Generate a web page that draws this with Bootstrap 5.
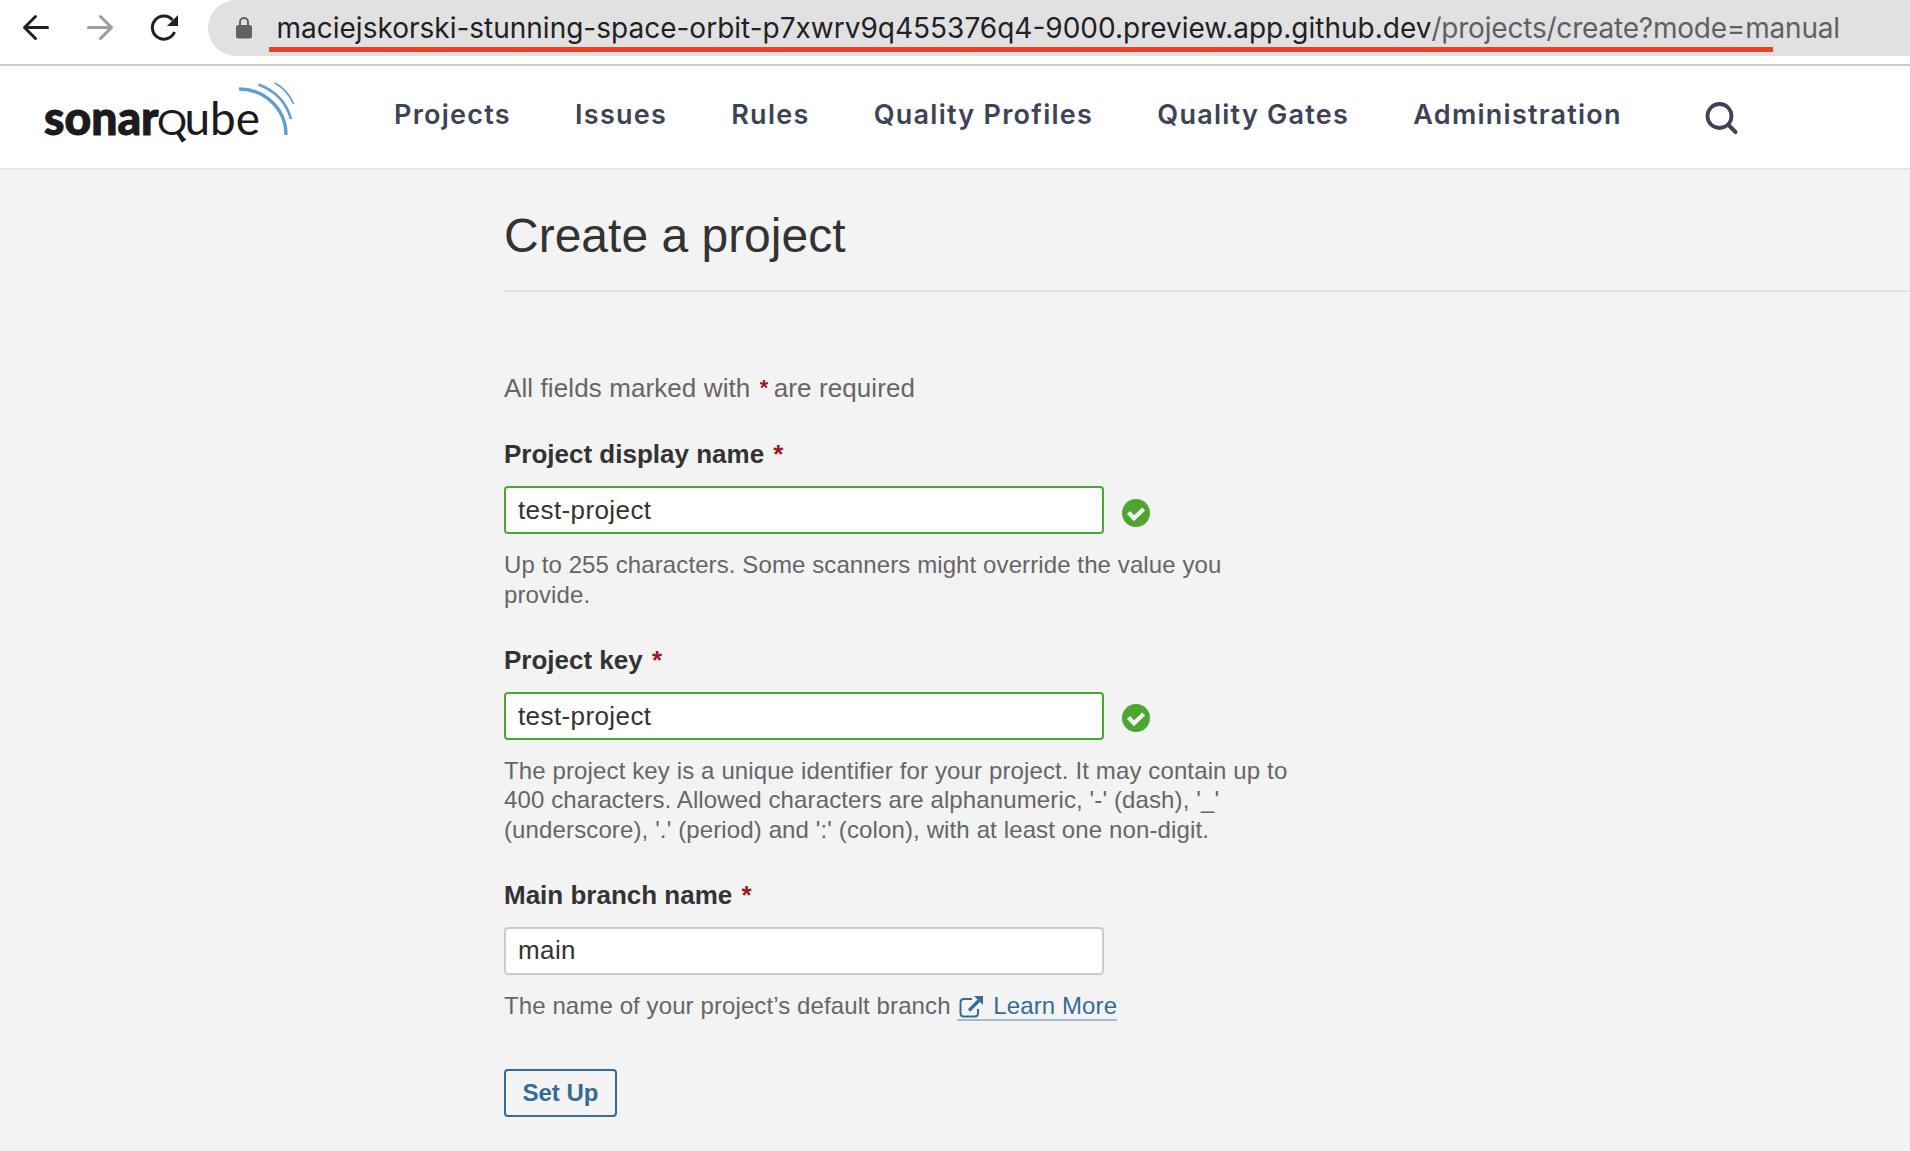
<!DOCTYPE html>
<html lang="en">
<head>
<meta charset="utf-8">
<title>Create a project</title>
<link href="https://cdn.jsdelivr.net/npm/bootstrap@5.3.0/dist/css/bootstrap.min.css" rel="stylesheet">
<style>
  body { background: #f3f3f3; color: #333; font: 24px/29.5px "Liberation Sans", Arial, sans-serif; height: 1151px; overflow: hidden; }
  .browser-bar { height: 66px; border-bottom: 2px solid #cdcdcd; padding-left: 22px; }
  .browser-tools { width: 186px; height: 56px; flex: none; }
  .address { height: 56px; background: #e1e1e1; border-radius: 28px 0 0 28px; padding-left: 28px; color: #202124; font: 28px/56px Inter, sans-serif; white-space: nowrap; }
  .address svg { margin-right: 24.5px; flex: none; }
  .address .path { color: #5f6063; letter-spacing: -.2px; }
  .url-line { position: absolute; left: 269px; top: 47px; width: 1504px; height: 5px; background: #ee4025; }
  .site-nav { height: 104px; border-bottom: 2px solid #e8e8e8; padding-left: 44px; }
  .brand-logo { margin-top: 12px; }
  .site-nav .nav-link { padding: 0; color: #3e4357; font: 600 27px/34px Inter, sans-serif; letter-spacing: 1.25px; white-space: nowrap; }
  .site-nav .navbar-nav { gap: 64.2px; margin: 32px 0 0 98px; }
  .nav-search { margin: 36px 0 0 83.5px; }
  .page { margin-left: 504px; }
  .page h1 { font-size: 48px; line-height: 60px; font-weight: 400; margin: 0; padding: 36px 0 24px; border-bottom: 2px solid #e3e3e3; }
  .intro { font-size: 26px; line-height: 32px; letter-spacing: .1px; color: #666; margin: 80px 0 34px; }
  .intro .req { font-size: 22px; line-height: 1; margin: 0 -2px 0 2px; position: relative; top: -2px; font-weight: 700; }
  .form-label { font-size: 26px; line-height: 32px; font-weight: 700; margin: 0 0 16px; display: block; }
  .form-label .req { margin-left: 2px; }
  .req { color: #a4161a; }
  .form-control { width: 600px; height: 48px; border: 2px solid #ccc; border-radius: 4px; padding: 0 12px; font-size: 26px; letter-spacing: .4px; color: #333; background: #fff; }
  .form-control.valid { border-color: #4ca630; }
  .tick { margin: 13px 0 0 18px; }
  .tick-key { margin-top: 12px; }
  .help { width: 800px; color: #666; letter-spacing: .1px; margin: 16px 0 35px; }
  .help-key { letter-spacing: .125px; margin-top: 15.8px; margin-bottom: 34.7px; }
  .help-branch { margin-bottom: 48px; }
  .learn { color: #366b96; text-decoration: none; border-bottom: 2px solid #a5bccf; display: inline-block; line-height: 27px; }
  .learn svg { margin: 2px 10px 0 2px; vertical-align: -4px; }
  .btn-setup { width: 113px; height: 48px; border: 2px solid #366b96; border-radius: 4px; color: #366b96; font-weight: 700; font-size: 24px; line-height: 43px; padding: 0; }
</style>
<script src="https://cdn.jsdelivr.net/npm/bootstrap@5.3.0/dist/js/bootstrap.bundle.min.js"></script>
</head>
<body>
<header class="bg-white">
  <div class="browser-bar position-relative d-flex">
    <svg class="browser-tools" viewBox="22 0 186 56" fill="none" stroke-width="3" stroke="#202124" stroke-linecap="round" stroke-linejoin="round">
      <path d="M47.500 27.500H25M35.500 16.500 24.500 27.500 35.500 38.500"/>
      <path stroke="#9b9b9b" d="M88.500 27.500H111M100.500 16.500 111.500 27.500 100.500 38.500"/>
      <path stroke-linecap="butt" d="M172.500 20A11.500 11.500 0 1 0 174.500 32"/>
      <path fill="#202124" stroke="none" d="M178 15V26H167Z"/>
    </svg>
    <div class="address d-flex align-items-center flex-grow-1">
      <svg width="16" height="22" viewBox="0 0 16 22"><rect y="8" width="16" height="13.500" rx="2" fill="#5f6368"/><path d="M4 9V5a4 4 0 0 1 8 0v4" fill="none" stroke="#5f6368" stroke-width="2"/></svg>
      <span>maciejskorski-stunning-space-orbit-p7xwrv9q455376q4-9000.preview.app.github.dev</span><span class="path">/projects/create?mode=manual</span>
    </div>
    <div class="url-line"></div>
  </div>
  <nav class="site-nav d-flex align-items-start">
    <svg class="brand-logo flex-shrink-0" width="252" height="70" viewBox="44 78 252 70">
      <g font-family="Lato" fill="#1b1a1c">
        <text x="44" y="135" font-size="47" font-weight="900" stroke="#1b1a1c" stroke-width="1" textLength="114.500" lengthAdjust="spacingAndGlyphs">sonar</text>
        <text x="157" y="135" font-size="35" textLength="30" lengthAdjust="spacingAndGlyphs">Q</text>
        <text x="184.500" y="135" font-size="47" textLength="75.500" lengthAdjust="spacingAndGlyphs">ube</text>
      </g>
      <path d="M178 132 183.500 141.500" stroke="#1b1a1c" stroke-width="4"/>
      <g fill="none" stroke="#5f9fd0"><path stroke-width="3.400" d="M239 89C265 89 286 109 286 135"/><path stroke-width="2.600" d="M258.500 84.500Q284 94 291 119"/><path stroke-width="1.800" d="M274.700 83Q288 90 293.500 104"/></g>
    </svg>
    <div class="navbar-nav flex-row">
      <a class="nav-link">Projects</a><a class="nav-link">Issues</a><a class="nav-link">Rules</a><a class="nav-link">Quality Profiles</a><a class="nav-link">Quality Gates</a><a class="nav-link">Administration</a>
    </div>
    <svg class="nav-search" width="34" height="34" viewBox="0 0 34 34" fill="none" stroke="#3e4357" stroke-width="3.800" stroke-linecap="round"><circle cx="14.500" cy="14" r="12"/><path d="M24 23.500 30.500 30" stroke-width="4"/></svg>
  </nav>
</header>
<main class="page">
  <h1>Create a project</h1>
  <p class="intro">All fields marked with <span class="req">*</span> are required</p>

  <label class="form-label" for="name">Project display name <span class="req">*</span></label>
  <div class="d-flex align-items-start">
    <input class="form-control valid" id="name" value="test-project">
    <svg class="tick" width="28" height="28" viewBox="0 0 28 28"><circle cx="14" cy="14" r="14" fill="#4ca630"/><path d="M6.500 13.500 12 19.200 21.700 10" fill="none" stroke="#f3f3f3" stroke-width="4.300"/></svg>
  </div>
  <p class="help">Up to 255 characters. Some scanners might override the value you<br>provide.</p>

  <label class="form-label" for="key">Project key <span class="req">*</span></label>
  <div class="d-flex align-items-start">
    <input class="form-control valid" id="key" value="test-project">
    <svg class="tick tick-key" width="28" height="28" viewBox="0 0 28 28"><circle cx="14" cy="14" r="14" fill="#4ca630"/><path d="M6.500 13.500 12 19.200 21.700 10" fill="none" stroke="#f3f3f3" stroke-width="4.300"/></svg>
  </div>
  <p class="help help-key">The project key is a unique identifier for your project. It may contain up to<br>400 characters. Allowed characters are alphanumeric, '-' (dash), '_'<br>(underscore), '.' (period) and ':' (colon), with at least one non-digit.</p>

  <label class="form-label" for="branch">Main branch name <span class="req">*</span></label>
  <input class="form-control" id="branch" value="main">
  <p class="help help-branch">The name of your project’s default branch <a class="learn"><svg width="24" height="22" viewBox="0 0 24 22"><path d="M13 3H5Q1.500 3 1.500 6.500V17Q1.500 20.500 5 20.500H15.500Q19 20.500 19 17V13" fill="none" stroke="#366b96" stroke-width="2"/><path d="M10 14.500 20 4.500" stroke="#366b96" stroke-width="3.200"/><path d="M15 0H24V9Z" fill="#366b96"/></svg>Learn More</a></p>
  <button class="btn btn-setup" type="button">Set Up</button>
</main>
</body>
</html>
